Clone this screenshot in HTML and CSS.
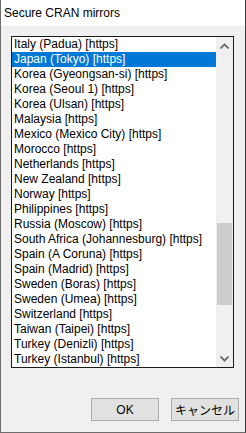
FILE: index.html
```html
<!DOCTYPE html>
<html lang="en">
<head>
    <meta charset="UTF-8">
    <meta name="viewport" content="width=device-width, initial-scale=1.0">
    <title>Secure CRAN mirrors</title>
    <link rel="stylesheet" href="styles.css">
</head>
<body>
    <div class="window">
        <div class="titlebar">Secure CRAN mirrors</div>
        <div class="content">
            <div class="listbox">
                <ul class="items">
                    <li>Italy (Padua) [https]</li>
                    <li class="selected">Japan (Tokyo) [https]</li>
                    <li>Korea (Gyeongsan-si) [https]</li>
                    <li>Korea (Seoul 1) [https]</li>
                    <li>Korea (Ulsan) [https]</li>
                    <li>Malaysia [https]</li>
                    <li>Mexico (Mexico City) [https]</li>
                    <li>Morocco [https]</li>
                    <li>Netherlands [https]</li>
                    <li>New Zealand [https]</li>
                    <li>Norway [https]</li>
                    <li>Philippines [https]</li>
                    <li>Russia (Moscow) [https]</li>
                    <li>South Africa (Johannesburg) [https]</li>
                    <li>Spain (A Coruna) [https]</li>
                    <li>Spain (Madrid) [https]</li>
                    <li>Sweden (Boras) [https]</li>
                    <li>Sweden (Umea) [https]</li>
                    <li>Switzerland [https]</li>
                    <li>Taiwan (Taipei) [https]</li>
                    <li>Turkey (Denizli) [https]</li>
                    <li>Turkey (Istanbul) [https]</li>
                </ul>
                <div class="scrollbar">
                    <div class="arrow">
                        <svg width="9" height="6" viewBox="0 0 9 6"><path d="M0.5 5.5 L4.5 1.5 L8.5 5.5" fill="none" stroke="#606060" stroke-width="1.6"/></svg>
                    </div>
                    <div class="track">
                        <div class="thumb"></div>
                    </div>
                    <div class="arrow">
                        <svg width="9" height="6" viewBox="0 0 9 6"><path d="M0.5 0.5 L4.5 4.5 L8.5 0.5" fill="none" stroke="#606060" stroke-width="1.6"/></svg>
                    </div>
                </div>
            </div>
            <div class="buttons">
                <button class="button">OK</button>
                <button class="button">キャンセル</button>
            </div>
        </div>
    </div>
</body>
</html>
```

FILE: styles.css
```css
body {
    margin: 0;
    font-family: "Liberation Sans", "Noto Sans CJK JP", sans-serif;
    font-size: 12px;
    color: #000;
}
.window {
    width: 246px;
    height: 433px;
    box-sizing: border-box;
    background-color: #f0f0f0;
    border-left: 1px solid #6d6d6d;
    border-right: 1px solid #3a3a3a;
    border-bottom: 1px solid #6d6d6d;
}
.titlebar {
    height: 26px;
    line-height: 26px;
    background-color: #fff;
    padding-left: 3px;
}
.content {
    padding: 10px 6px 0 10px;
}
.listbox {
    display: flex;
    width: 223px;
    height: 332px;
    box-sizing: border-box;
    border: 1px solid #1a1a1a;
    background-color: #fff;
}
.items {
    flex: 1;
    min-width: 0;
    overflow: hidden;
    list-style: none;
    margin: 0;
    padding: 0;
}
.items li {
    height: 15px;
    line-height: 15px;
    padding-left: 2px;
    white-space: nowrap;
}
.items li.selected {
    background-color: #0078d7;
    color: #fff;
}
.scrollbar {
    width: 17px;
    flex-shrink: 0;
    display: flex;
    flex-direction: column;
    background-color: #f0f0f0;
}
.arrow {
    height: 17px;
    display: flex;
    justify-content: center;
    align-items: center;
}
.track {
    flex: 1;
}
.thumb {
    margin: 169px 1px 0 1px;
    height: 82px;
    background-color: #cdcdcd;
}
.buttons {
    display: flex;
    justify-content: flex-end;
    gap: 12px;
    margin-top: 30px;
}
.button {
    width: 68px;
    height: 23px;
    padding: 0;
    font-family: "Liberation Sans", "Noto Sans CJK JP", sans-serif;
    font-size: 12px;
    color: #000;
    background-color: #e1e1e1;
    border: 1px solid #adadad;
    border-radius: 0;
}
```
